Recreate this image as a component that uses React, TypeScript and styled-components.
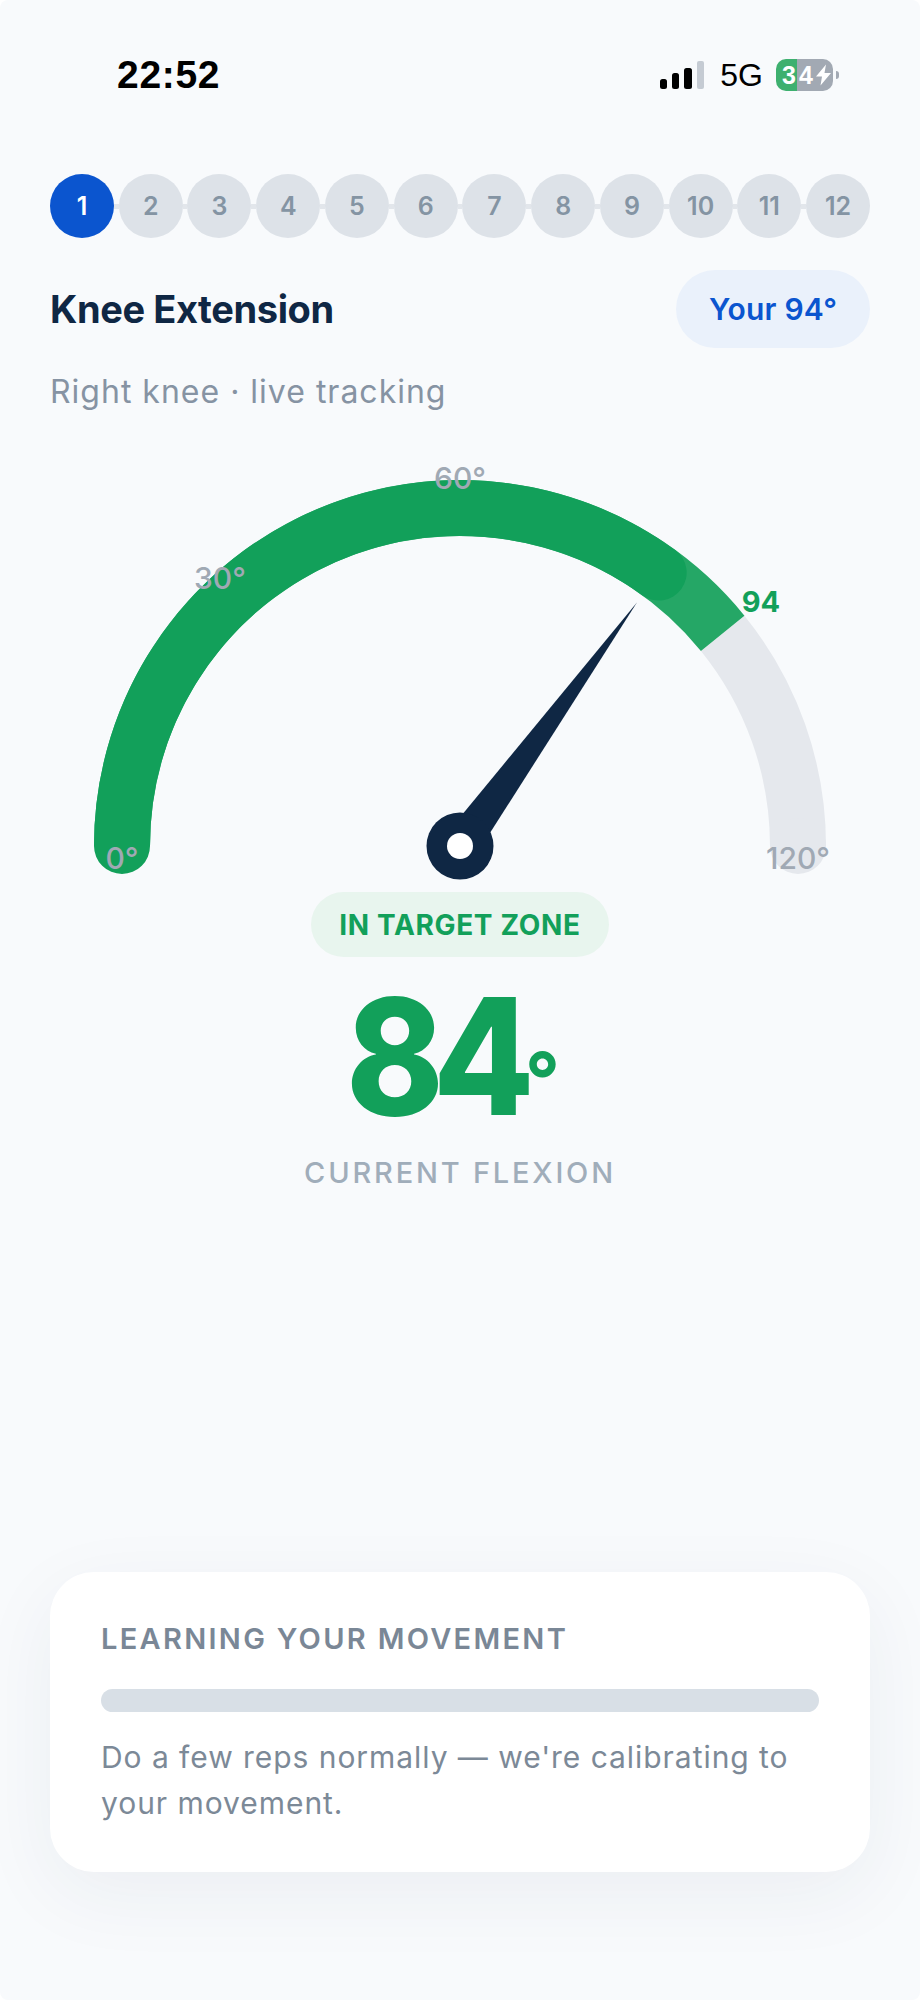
import React from 'react'
import styled, { createGlobalStyle } from 'styled-components'

const CX = 460
const CY = 847
const R = 338
const MAX = 120

// gauge maps 0..120 on to a half circle, left to right
const polar = (value: number, radius: number = R) => {
  const a = Math.PI - (value / MAX) * Math.PI
  return { x: CX + radius * Math.cos(a), y: CY - radius * Math.sin(a) }
}

const arc = (from: number, to: number) => {
  const a = polar(from)
  const b = polar(to)
  return `M ${a.x} ${a.y} A ${R} ${R} 0 0 1 ${b.x} ${b.y}`
}

const needlePath = (value: number) => {
  const tip = polar(value, 301)
  const a = Math.PI - (value / MAX) * Math.PI
  const nx = Math.sin(a) * 18.3
  const ny = Math.cos(a) * 18.3
  return `M ${CX + nx} ${CY + ny} L ${tip.x} ${tip.y} L ${CX - nx} ${CY - ny} Z`
}

const GlobalStyle = createGlobalStyle`
  html, body {
    margin: 0;
    padding: 0;
    background: #ffffff;
  }
  * {
    box-sizing: border-box;
  }
`

const Screen = styled.div`
  width: 920px;
  height: 2000px;
  display: flex;
  flex-direction: column;
  overflow: hidden;
  border-radius: 8px;
  background: #f8fafc;
  font-family: Inter, 'Liberation Sans', sans-serif;
`

const StatusBar = styled.div`
  height: 60px;
  margin-top: 45px;
  padding: 0 81px 0 117px;
  display: flex;
  align-items: center;
  justify-content: space-between;
  font-family: 'Liberation Sans', sans-serif;
  color: #000000;
`

const Clock = styled.div`
  font-size: 39px;
  font-weight: 700;
  letter-spacing: 0.7px;
`

const StatusIcons = styled.div`
  display: flex;
  align-items: center;
`

const NetworkLabel = styled.div`
  margin: 0 13px 0 16px;
  font-size: 32px;
  line-height: 32px;
`

const Battery = styled.div`
  width: 57px;
  height: 32px;
  display: flex;
  align-items: center;
  overflow: hidden;
  padding-left: 6px;
  border-radius: 10px;
  background: linear-gradient(90deg, #3eb06f 0, #3eb06f 21px, #a2a9b3 21px);
  color: #ffffff;
  font-size: 25px;
  font-weight: 700;
  letter-spacing: 3px;
`

const BatteryTip = styled.div`
  width: 3px;
  height: 8px;
  margin-left: 3px;
  border-radius: 0 3px 3px 0;
  background: #a2a9b3;
`

const Content = styled.div`
  flex: 1;
  display: flex;
  flex-direction: column;
  padding: 69px 50px 128px;
`

const Steps = styled.div`
  display: flex;
  align-items: center;
`

const Step = styled.div<{ $active?: boolean }>`
  width: 64px;
  height: 64px;
  flex: none;
  display: flex;
  align-items: center;
  justify-content: center;
  border-radius: 50%;
  background: ${(p) => (p.$active ? '#0b55cf' : '#dde2e8')};
  color: ${(p) => (p.$active ? '#ffffff' : '#8494a3')};
  font-size: 25px;
  font-weight: 600;
`

const StepLink = styled.div`
  flex: 1;
  height: 5px;
  background: #e2e6eb;
`

const TitleRow = styled.div`
  margin-top: 32px;
  display: flex;
  align-items: center;
  justify-content: space-between;
`

const Title = styled.h1`
  margin: 0;
  font-size: 38px;
  font-weight: 700;
  letter-spacing: -0.4px;
  color: #0f2744;
`

const RomBadge = styled.div`
  width: 194px;
  height: 78px;
  display: flex;
  align-items: center;
  justify-content: center;
  border-radius: 39px;
  background: #eaf1fb;
  color: #0b55cf;
  font-size: 30px;
  font-weight: 600;
  letter-spacing: 0.2px;
`

const Subtitle = styled.div`
  margin-top: 24px;
  font-size: 32px;
  line-height: 40px;
  letter-spacing: 1px;
  color: #8693a3;
`

const GaugeWrap = styled.div`
  margin: 32px -50px 0;
  height: 446px;
`

const GaugeLabel = styled.text<{ $accent?: boolean }>`
  font-family: Inter, 'Liberation Sans', sans-serif;
  font-size: ${(p) => (p.$accent ? '29px' : '30px')};
  font-weight: ${(p) => (p.$accent ? 700 : 500)};
  fill: ${(p) => (p.$accent ? '#12a05a' : '#a0a9b4')};
`

const ZonePill = styled.div`
  align-self: center;
  width: 298px;
  height: 65px;
  margin-top: 2px;
  display: flex;
  align-items: center;
  justify-content: center;
  border-radius: 33px;
  background: #e8f5ee;
  color: #12a05a;
  font-size: 28px;
  font-weight: 700;
  letter-spacing: 0.65px;
`

const Reading = styled.div`
  align-self: center;
  margin: 23px 14px 0 0;
  height: 152px;
  white-space: nowrap;
  color: #12a05a;
  font-size: 162px;
  line-height: 152px;
  font-weight: 800;
`

const ReadingDigits = styled.span`
  display: inline-block;
  width: 179px;
  letter-spacing: -12px;
  transform: scaleX(0.91);
  transform-origin: left center;
`

const ReadingDegree = styled.span`
  font-size: 76px;
  font-weight: 700;
  line-height: 1;
  vertical-align: 8px;
`

const ReadingCaption = styled.div`
  align-self: center;
  margin-top: 23px;
  font-size: 29px;
  font-weight: 500;
  letter-spacing: 2.8px;
  color: #a0adba;
`

const LearnCard = styled.div`
  margin-top: auto;
  height: 300px;
  padding: 50px 51px;
  border-radius: 44px;
  background: #ffffff;
  box-shadow: 0 22px 80px rgba(30, 50, 80, 0.06);
`

const LearnTitle = styled.div`
  font-size: 29px;
  line-height: 34px;
  font-weight: 600;
  letter-spacing: 2.3px;
  color: #7a8796;
`

const LearnBar = styled.div`
  height: 23px;
  margin-top: 33px;
  border-radius: 12px;
  background: #d8dfe6;
`

const LearnText = styled.p`
  margin: 22px 0 0;
  font-size: 30px;
  line-height: 46px;
  letter-spacing: 0.95px;
  color: #7c8997;
`

const STEPS = [1, 2, 3, 4, 5, 6, 7, 8, 9, 10, 11, 12]

const App: React.FC = () => {
  return (
    <Screen>
      <GlobalStyle />
      <StatusBar>
        <Clock>22:52</Clock>
        <StatusIcons>
          <svg width="44" height="28" viewBox="0 0 44 28">
            <rect x="0" y="18" width="7" height="10" rx="2.5" fill="#000" />
            <rect x="12" y="12" width="7" height="16" rx="2.5" fill="#000" />
            <rect x="24" y="7" width="8" height="21" rx="2.5" fill="#000" />
            <rect x="37" y="0" width="7" height="28" rx="2" fill="#c5cbd3" />
          </svg>
          <NetworkLabel>5G</NetworkLabel>
          <Battery>
            34
            <svg width="15" height="22" viewBox="0 0 15 21">
              <path d="M10 0 L0 12 H6 L4.5 21 L15 8.5 H8.5 Z" fill="#fff" />
            </svg>
          </Battery>
          <BatteryTip />
        </StatusIcons>
      </StatusBar>
      <Content>
        <Steps>
          {STEPS.map((n, i) => (
            <React.Fragment key={n}>
              {i > 0 && <StepLink />}
              <Step $active={n === 1}>{n}</Step>
            </React.Fragment>
          ))}
        </Steps>
        <TitleRow>
          <Title>Knee Extension</Title>
          <RomBadge>Your 94°</RomBadge>
        </TitleRow>
        <Subtitle>Right knee · live tracking</Subtitle>
        <GaugeWrap>
          <svg width="920" height="446" viewBox="0 445 920 446">
            <path d={arc(94, 120)} fill="none" stroke="#e5e8ed" strokeWidth="56" />
            <circle cx={polar(120).x} cy={polar(120).y} r="28" fill="#e5e8ed" />
            <path d={arc(0, 94)} fill="none" stroke="#25a766" strokeWidth="56" />
            <path d={arc(0, 84)} fill="none" stroke="#12a05a" strokeWidth="56" strokeLinecap="round" />
            <GaugeLabel x="460" y="490" textAnchor="middle">60°</GaugeLabel>
            <GaugeLabel x="220" y="590" textAnchor="middle">30°</GaugeLabel>
            <GaugeLabel x="122" y="870" textAnchor="middle">0°</GaugeLabel>
            <GaugeLabel x="798" y="870" textAnchor="middle">120°</GaugeLabel>
            <GaugeLabel $accent x="761" y="613" textAnchor="middle">94</GaugeLabel>
            <path d={needlePath(84)} fill="#0f2744" />
            <circle cx={CX} cy={CY} r="33.5" fill="#0f2744" />
            <circle cx={CX} cy={CY} r="13" fill="#ffffff" />
          </svg>
        </GaugeWrap>
        <ZonePill>IN TARGET ZONE</ZonePill>
        <Reading>
          <ReadingDigits>84</ReadingDigits>
          <ReadingDegree>°</ReadingDegree>
        </Reading>
        <ReadingCaption>CURRENT FLEXION</ReadingCaption>
        <LearnCard>
          <LearnTitle>LEARNING YOUR MOVEMENT</LearnTitle>
          <LearnBar />
          <LearnText>Do a few reps normally — we're calibrating to your movement.</LearnText>
        </LearnCard>
      </Content>
    </Screen>
  )
}

export default App
